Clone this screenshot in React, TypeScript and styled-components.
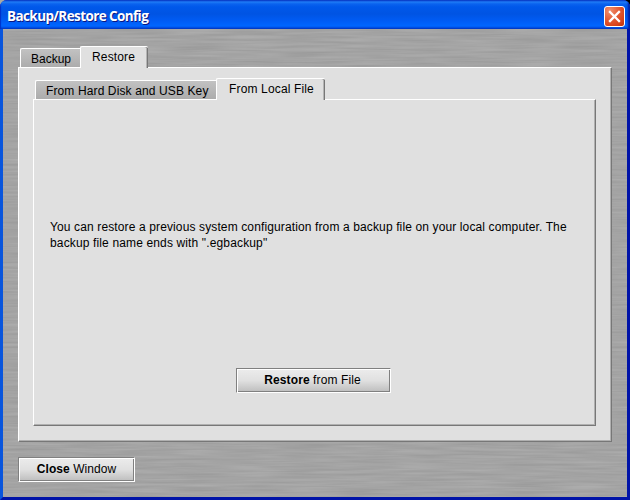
import React from "react";
import styled, { createGlobalStyle, css } from "styled-components";

const GlobalStyle = createGlobalStyle`
  * { box-sizing: border-box; }
  body { margin: 0; background: linear-gradient(90deg, #a9aaa4 50%, #000 50%); overflow: hidden; }
`;

const Window = styled.main`
  width: 630px;
  height: 500px;
  display: flex;
  flex-direction: column;
  overflow: hidden;
  border-radius: 7px 7px 0 0;
  background: #0831d9;
  font: 12px/16px "Liberation Sans", Arial, sans-serif;
  color: #000;
`;

const TitleBar = styled.header`
  height: 29px;
  flex: none;
  display: flex;
  align-items: center;
  justify-content: space-between;
  padding: 3px 5px 0 7px;
  background: linear-gradient(
    #0b3fd0 0, #1f7cf5 2px, #0a62ee 4px, #0058ea 7px, #0054e3 14px,
    #005cf5 21px, #0066ff 26px, #0058ee 27px, #0040cf 29px
  );
  box-shadow: inset 2px 0 1px -1px #0030c8, inset -2px 0 2px #001fa5;
`;

const Title = styled.h1<{ $tracking: number }>`
  margin: 0;
  color: #fff;
  font: 700 13.5px/18px "Open Sans", "Noto Sans", sans-serif;
  letter-spacing: ${(p) => p.$tracking}px;
  text-shadow: 1px 1px 0 #0a1883;
  white-space: nowrap;
`;

const CloseBox = styled.button`
  width: 21px;
  height: 21px;
  padding: 0;
  display: grid;
  place-items: center;
  border: 1px solid #fff;
  border-radius: 3px;
  background: radial-gradient(circle at 25% 20%, #f0906e 0, #e35a34 45%, #d8431b 75%, #b93208 100%);
`;

const Frame = styled.div`
  flex: 1;
  display: flex;
  border: solid;
  border-width: 0 3px 3px;
  border-color: #0831d9 #0013a8 #0013a8 #0855dd;
`;

const Metal = styled.div`
  position: relative;
  isolation: isolate;
  flex: 1;
  padding: 17px 15px 0;
  background: #a0a0a0;
`;

const Grain = styled.svg`
  position: absolute;
  inset: 0;
  width: 100%;
  height: 100%;
  z-index: -1;
`;

const TabRow = styled.div`
  display: flex;
  align-items: flex-end;
  height: 22px;
  margin-bottom: -1px;
  padding-left: 2px;
`;

const Tab = styled.button<{ $active?: boolean; $width: number; $tracking: number }>`
  width: ${(p) => p.$width}px;
  height: 20px;
  padding: 2px 0 0 10px;
  border: solid #fff;
  border-width: 1px 0 1px 1px;
  border-radius: 2px 0 0 0;
  background: linear-gradient(#c2c2c2, #acacac);
  color: #000;
  font: inherit;
  letter-spacing: ${(p) => p.$tracking}px;
  text-align: left;
  white-space: nowrap;
  ${(p) =>
    p.$active &&
    css`
      position: relative;
      height: 22px;
      padding: 2px 0 3px 11px;
      border-width: 1px 0 0 1px;
      border-radius: 2px 2px 0 0;
      background: #e0e0e0;
      box-shadow: inset -1px 0 #777, inset -2px 0 #b4b4b4;
    `}
`;

const WideTab = styled(Tab)`
  padding-left: 12px;
`;

const Panel = styled.section<{ $height: number }>`
  height: ${(p) => p.$height}px;
  border: 1px solid #fff;
  border-right-color: #777;
  border-bottom-color: #777;
  box-shadow: inset -1px -1px #b0b0b0;
  background: #e0e0e0;
`;

const OuterPanel = styled(Panel)`
  padding: 10px 15px 0 14px;
`;

const InnerPanel = styled(Panel)`
  display: flex;
  flex-direction: column;
  align-items: center;
  padding: 119px 2px 0 0;
`;

const Message = styled.p`
  align-self: stretch;
  margin: 0 0 117px;
  padding-left: 16px;
  white-space: nowrap;
`;

const Line = styled.span<{ $tracking: number }>`
  display: block;
  letter-spacing: ${(p) => p.$tracking}px;
`;

const PushButton = styled.button<{ $width: number; $tracking: number }>`
  display: block;
  width: ${(p) => p.$width}px;
  height: 25px;
  padding: 0 2px 1px 0;
  border: 1px solid #808080;
  border-right-color: #fff;
  border-bottom-color: #fff;
  box-shadow: inset 1px 1px #fff, inset -1px -1px #808080;
  background: linear-gradient(#ececec, #e0e0e0 50%, #bdbdbd);
  color: #000;
  font: inherit;
  letter-spacing: ${(p) => p.$tracking}px;
  white-space: nowrap;
`;

const CloseWindow = styled(PushButton)`
  margin-top: 15px;
  padding-right: 0;
`;

export default function App() {
  return (
    <>
      <GlobalStyle />
      <Window>
        <TitleBar>
          <Title $tracking={-0.6}>Backup/Restore Config</Title>
          <CloseBox aria-label="Close">
            <svg width="19" height="19" viewBox="0 0 19 19">
              <path d="M5 5l9 9M14 5l-9 9" stroke="#fff" strokeWidth="2.3" fill="none" strokeLinecap="square" />
            </svg>
          </CloseBox>
        </TitleBar>
        <Frame>
          <Metal>
            <Grain aria-hidden="true">
              <filter id="brushed" x="0" y="0" width="100%" height="100%" colorInterpolationFilters="sRGB">
                <feTurbulence type="fractalNoise" baseFrequency="0.018 0.4" numOctaves="2" seed="4" />
                <feColorMatrix values=".1 0 0 0 .592 .1 0 0 0 .592 .1 0 0 0 .592 0 0 0 0 1" />
              </filter>
              <rect width="100%" height="100%" filter="url(#brushed)" />
            </Grain>
            <TabRow>
              <Tab $width={60} $tracking={0}>Backup</Tab>
              <Tab $active $width={68} $tracking={0.15}>Restore</Tab>
            </TabRow>
            <OuterPanel $height={375}>
              <TabRow>
                <Tab $width={181} $tracking={0.12}>From Hard Disk and USB Key</Tab>
                <WideTab $active $width={109} $tracking={0.15}>From Local File</WideTab>
              </TabRow>
              <InnerPanel $height={327}>
                <Message>
                  <Line $tracking={0.125}>You can restore a previous system configuration from a backup file on your local computer. The</Line>
                  <Line $tracking={0.14}>backup file name ends with ".egbackup"</Line>
                </Message>
                <PushButton $width={155} $tracking={0.1}><b>Restore</b> from File</PushButton>
              </InnerPanel>
            </OuterPanel>
            <CloseWindow $width={117} $tracking={0.05}><b>Close</b> Window</CloseWindow>
          </Metal>
        </Frame>
      </Window>
    </>
  );
}
